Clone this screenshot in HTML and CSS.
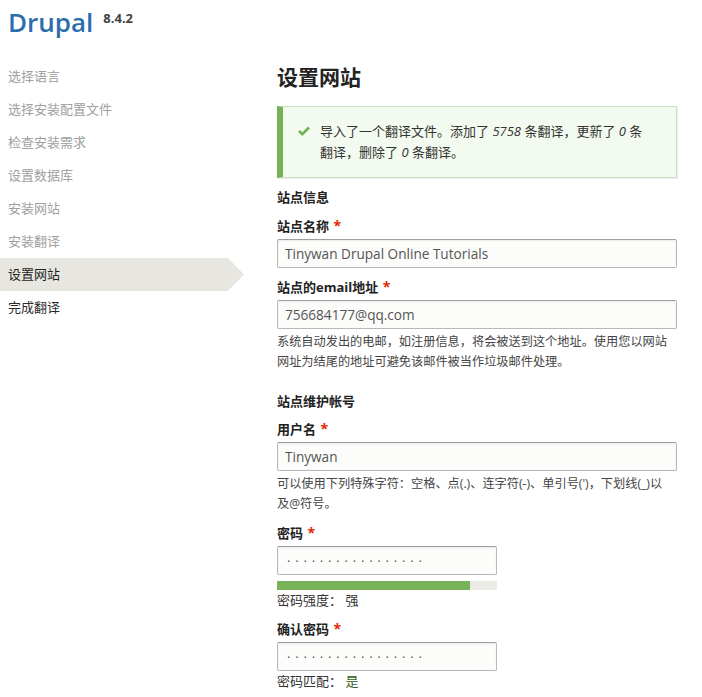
FILE: index.html
```html
<!DOCTYPE html>
<html lang="zh-CN">
<head>
<meta charset="utf-8">
<title>设置网站 | Drupal</title>
<link rel="stylesheet" href="styles.css">
</head>
<body>
<header class="site-header">
  <span class="site-name">Drupal</span>
  <span class="version">8.4.2</span>
</header>
<div class="layout">
  <nav class="steps">
    <ol class="step-list">
      <li class="step done">选择语言</li>
      <li class="step done">选择安装配置文件</li>
      <li class="step done">检查安装需求</li>
      <li class="step done">设置数据库</li>
      <li class="step done">安装网站</li>
      <li class="step done">安装翻译</li>
      <li class="step active">设置网站</li>
      <li class="step todo">完成翻译</li>
    </ol>
  </nav>
  <main class="content">
    <h1 class="page-title">设置网站</h1>
    <div class="message">
      <svg class="message-icon" width="14" height="11" viewBox="0 0 14 11" aria-hidden="true">
        <path d="M1 5.8 L2.9 3.9 L5.3 6.3 L11.1 0.5 L13 2.4 L5.3 10.1 Z" fill="#73b355"/>
      </svg>
      <p class="message-text">导入了一个翻译文件。添加了 <em>5758</em> 条翻译，更新了 <em>0</em> 条翻译，删除了 <em>0</em> 条翻译。</p>
    </div>

    <section class="fieldset first">
      <h2 class="legend">站点信息</h2>
      <div class="item">
        <label class="label">站点名称 <span class="req">*</span></label>
        <input class="field" type="text" value="Tinywan Drupal Online Tutorials">
      </div>
      <div class="item">
        <label class="label">站点的email地址 <span class="req">*</span></label>
        <input class="field" type="text" value="756684177@qq.com">
        <p class="desc">系统自动发出的电邮，如注册信息，将会被送到这个地址。使用您以网站网址为结尾的地址可避免该邮件被当作垃圾邮件处理。</p>
      </div>
    </section>

    <section class="fieldset second">
      <h2 class="legend">站点维护帐号</h2>
      <div class="item tight">
        <label class="label">用户名 <span class="req">*</span></label>
        <input class="field" type="text" value="Tinywan">
        <p class="desc">可以使用下列特殊字符：空格、点(.)、连字符(-)、单引号(')，下划线(_)以及@符号。</p>
      </div>
      <div class="item">
        <label class="label">密码 <span class="req">*</span></label>
        <input class="field short dots" type="text" value="·················">
        <div class="strength"><div class="strength-fill" style="width:87.7%"></div></div>
        <p class="status">密码强度：&nbsp;强</p>
      </div>
      <div class="item">
        <label class="label">确认密码 <span class="req">*</span></label>
        <input class="field short dots" type="text" value="·················">
        <p class="status match">密码匹配：&nbsp;<span class="ok">是</span></p>
      </div>
    </section>
  </main>
</div>
</body>
</html>
```
FILE: styles.css
```css
* { box-sizing: border-box; }

body {
  margin: 0;
  font-family: "Open Sans", "Noto Sans CJK SC", sans-serif;
  font-size: 13px;
  color: #333;
  background: #fff;
}

.site-header {
  display: flex;
  align-items: flex-start;
  height: 60px;
  padding: 4px 0 0 8px;
}
.site-name {
  font-size: 26px;
  font-weight: 600;
  line-height: 36px;
  color: #2a6ead;
}
.version {
  font-size: 13px;
  font-weight: bold;
  line-height: 16px;
  color: #444;
  margin: 6px 0 0 10px;
}

.layout {
  display: flex;
  gap: 33px;
}

.steps {
  width: 244px;
  flex: none;
}
.step-list {
  list-style: none;
  margin: 0;
  padding: 0;
}
.step {
  height: 33px;
  line-height: 33px;
  padding-left: 8px;
  color: #a0a0a0;
}
.step.active {
  background: #e7e6e1;
  color: #1f1f1f;
  clip-path: polygon(0 0, calc(100% - 16px) 0, 100% 50%, calc(100% - 16px) 100%, 0 100%);
}
.step.todo { color: #2b2b2b; }

.content {
  width: 400px;
  flex: none;
}

.page-title {
  margin: 0;
  font-size: 21px;
  line-height: 34px;
  font-weight: bold;
  color: #222;
}

.message {
  margin-top: 12px;
  display: flex;
  align-items: flex-start;
  border: 1px solid #c9e1bd;
  border-left: 6px solid #77b259;
  background: #f3faef;
  padding: 14px 30px 14px 14px;
  box-shadow: 1px 1px 1px rgba(0,0,0,0.06);
}
.message-icon {
  flex: none;
  margin: 5px 9px 0 0;
}
.message-text {
  margin: 0;
  line-height: 21px;
  color: #333;
}
.message-text em { font-style: italic; }

.fieldset.first { margin-top: 9px; }
.fieldset.second { margin-top: 19px; }

.legend {
  margin: 0;
  font-size: 13px;
  font-weight: bold;
  line-height: 20px;
  color: #222;
}

.item { margin-top: 9px; }
.item.tight { margin-top: 8px; }

.label {
  display: block;
  font-weight: bold;
  line-height: 20px;
  color: #222;
}
.req {
  color: #e32700;
  font-size: 14px;
  margin-left: 1px;
}

.field {
  display: block;
  margin-top: 3px;
  width: 100%;
  height: 29px;
  padding: 0 7px;
  font-family: "Open Sans", "Noto Sans CJK SC", sans-serif;
  font-size: 13.6px;
  color: #555;
  background: #fcfcfa;
  border: 1px solid #b8b8b8;
  border-top-color: #a0a0a0;
  border-radius: 2px;
  box-shadow: inset 0 1px 2px rgba(0,0,0,0.08);
  outline: none;
}
.field.short { width: 220px; }
.field.dots {
  padding-left: 9px;
  font-size: 13px;
  letter-spacing: 4.8px;
  color: #555;
}

.desc {
  margin: 3px 0 0;
  padding-right: 6px;
  font-size: 12.2px;
  line-height: 20px;
  color: #444;
}

.strength {
  margin-top: 6px;
  width: 220px;
  height: 9px;
  background: #ebeae4;
}
.strength-fill {
  height: 100%;
  background: #77b259;
}

.status {
  margin: 0;
  line-height: 20px;
  color: #333;
}
.ok { color: #325e1c; }
```
